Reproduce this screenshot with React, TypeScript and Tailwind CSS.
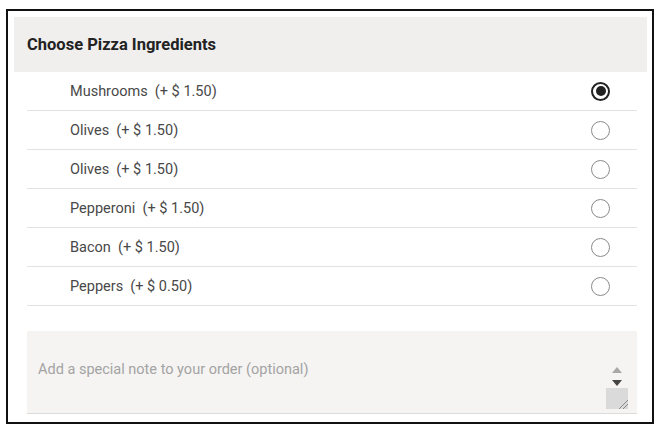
const ingredients = [
  { name: "Mushrooms", price: "1.50", checked: true },
  { name: "Olives", price: "1.50" },
  { name: "Olives", price: "1.50" },
  { name: "Pepperoni", price: "1.50" },
  { name: "Bacon", price: "1.50" },
  { name: "Peppers", price: "0.50" },
];

const Radio = ({ checked }: { checked?: boolean }) =>
  checked ? (
    <span className="flex h-[19px] w-[19px] items-center justify-center rounded-full border-2 border-[#222]">
      <span className="h-[10px] w-[10px] rounded-full bg-[#222]" />
    </span>
  ) : (
    <span className="h-[19px] w-[19px] rounded-full border-[1.5px] border-[#8a8a8a]" />
  );

export default function App() {
  return (
    <div className="min-h-screen bg-white pl-[6px] pt-[9px] font-['Roboto',sans-serif]">
      <div className="w-[648px] h-[415px] border-2 border-[#111] pl-[6px] pr-[5px] pt-[6px] pb-[8px] flex flex-col">
        {/* Header */}
        <div className="h-[55px] bg-[#f0efee] flex items-center pl-[13px]">
          <h2 className="pt-[1px] text-[16.5px] font-bold text-[#222]">Choose Pizza Ingredients</h2>
        </div>

        {/* Options */}
        <ul className="ml-[13px] mr-[10px]">
          {ingredients.map((item, i) => (
            <li
              key={i}
              className="h-[39px] flex items-center justify-between border-b border-[#e2e2e2] pl-[43px] pr-[27px]"
            >
              <span className="pt-[2px] text-[14.5px] text-[#484848] whitespace-pre">
                {item.name}  (+ $ {item.price})
              </span>
              <Radio checked={item.checked} />
            </li>
          ))}
        </ul>

        {/* Note */}
        <div className="mt-[25px] ml-[13px] mr-[10px] h-[83px] bg-[#f5f4f2] border-b border-[#dcdcdc] flex items-center justify-between pl-[11px] pr-[9px]">
          <span className="pb-[4px] text-[14.5px] text-[#a3a3a3]">Add a special note to your order (optional)</span>
          <div className="self-end mb-[4px] flex flex-col items-center w-[22px]">
            <svg width="10" height="6" viewBox="0 0 10 6" className="mb-[7px]">
              <path d="M0 6 L5 0 L10 6 Z" fill="#a8a8a8" />
            </svg>
            <svg width="10" height="6" viewBox="0 0 10 6" className="mb-[2px]">
              <path d="M0 0 L10 0 L5 6 Z" fill="#444" />
            </svg>
            <div className="w-[22px] h-[21px] bg-[#dadada] flex items-end justify-end">
              <svg width="10" height="10" viewBox="0 0 10 10">
                <path d="M1 10 L10 1 M5 10 L10 5" stroke="#888" strokeWidth="1" />
              </svg>
            </div>
          </div>
        </div>
      </div>
    </div>
  );
}
